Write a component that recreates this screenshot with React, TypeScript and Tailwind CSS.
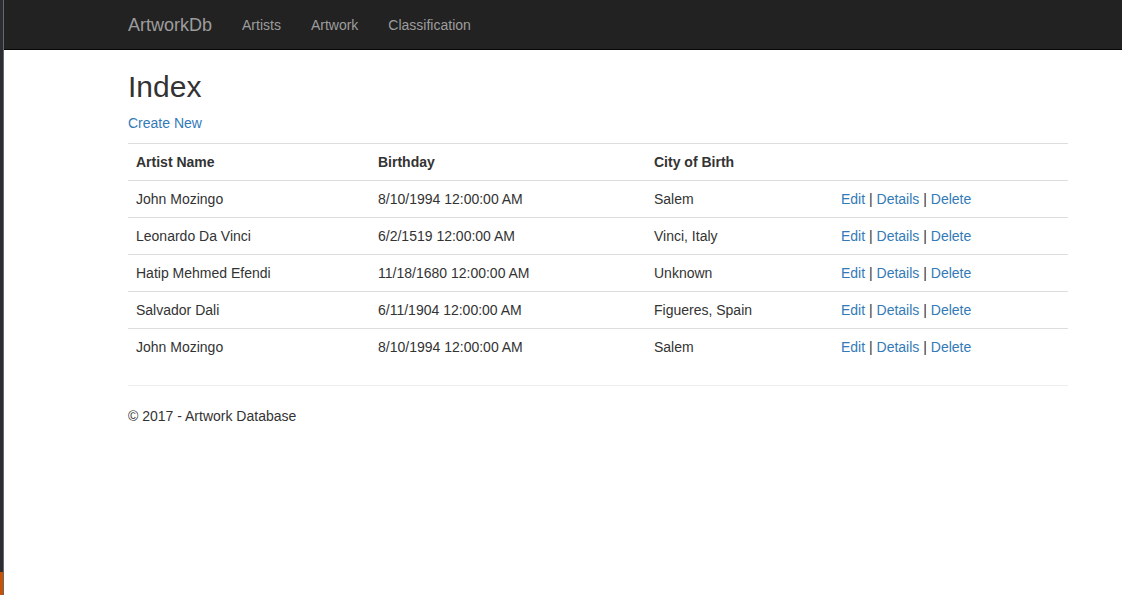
import React from 'react';

type Artist = {
  name: string;
  birthday: string;
  city: string;
};

const artists: Artist[] = [
  { name: 'John Mozingo', birthday: '8/10/1994 12:00:00 AM', city: 'Salem' },
  { name: 'Leonardo Da Vinci', birthday: '6/2/1519 12:00:00 AM', city: 'Vinci, Italy' },
  { name: 'Hatip Mehmed Efendi', birthday: '11/18/1680 12:00:00 AM', city: 'Unknown' },
  { name: 'Salvador Dali', birthday: '6/11/1904 12:00:00 AM', city: 'Figueres, Spain' },
  { name: 'John Mozingo', birthday: '8/10/1994 12:00:00 AM', city: 'Salem' },
];

const navLinks = ['Artists', 'Artwork', 'Classification'];

export default function App() {
  return (
    <div className="flex min-h-[595px] bg-white font-['Liberation_Sans',Arial,sans-serif] text-[14px] leading-[20px] text-[#333]">
      {/* window edge from the editor behind the browser */}
      <div className="flex w-[4px] shrink-0">
        <div className="flex w-[3px] flex-col">
          <div className="flex-1 bg-[#2d2d30]"></div>
          <div className="h-[23px] bg-[#ca5100]"></div>
        </div>
        <div className="w-[1px] bg-[#5f6a72]"></div>
      </div>

      <div className="flex-1">
        <nav className="flex h-[50px] items-start border-b border-[#080808] bg-[#222] pl-[109px]">
          <a className="px-[15px] py-[15px] text-[18px] leading-[20px] text-[#9d9d9d]">ArtworkDb</a>
          {navLinks.map((link) => (
            <a key={link} className="px-[15px] py-[15px] leading-[20px] text-[#9d9d9d]">
              {link}
            </a>
          ))}
        </nav>

        <main className="w-[940px] pl-0 ml-[124px]">
          <h2 className="mt-[20px] mb-[10px] text-[30px] leading-[33px] font-normal text-[#333]">Index</h2>
          <p className="mb-[10px]">
            <a className="text-[#337ab7]">Create New</a>
          </p>

          <table className="w-full table-fixed border-collapse">
            <colgroup>
              <col className="w-[242px]" />
              <col className="w-[276px]" />
              <col className="w-[187px]" />
              <col className="w-[235px]" />
            </colgroup>
            <tbody>
              <tr>
                <th className="border-t border-[#ddd] p-[8px] text-left font-bold">Artist Name</th>
                <th className="border-t border-[#ddd] p-[8px] text-left font-bold">Birthday</th>
                <th className="border-t border-[#ddd] p-[8px] text-left font-bold">City of Birth</th>
                <th className="border-t border-[#ddd] p-[8px]"></th>
              </tr>
              {artists.map((a, idx) => (
                <tr key={idx}>
                  <td className="border-t border-[#ddd] p-[8px]">{a.name}</td>
                  <td className="border-t border-[#ddd] p-[8px]">{a.birthday}</td>
                  <td className="border-t border-[#ddd] p-[8px]">{a.city}</td>
                  <td className="border-t border-[#ddd] p-[8px]">
                    <a className="text-[#337ab7]">Edit</a> |{' '}
                    <a className="text-[#337ab7]">Details</a> |{' '}
                    <a className="text-[#337ab7]">Delete</a>
                  </td>
                </tr>
              ))}
            </tbody>
          </table>

          <hr className="mt-[20px] mb-[20px] border-t border-[#eee]" />
          <footer>
            <p>© 2017 - Artwork Database</p>
          </footer>
        </main>
      </div>
    </div>
  );
}
